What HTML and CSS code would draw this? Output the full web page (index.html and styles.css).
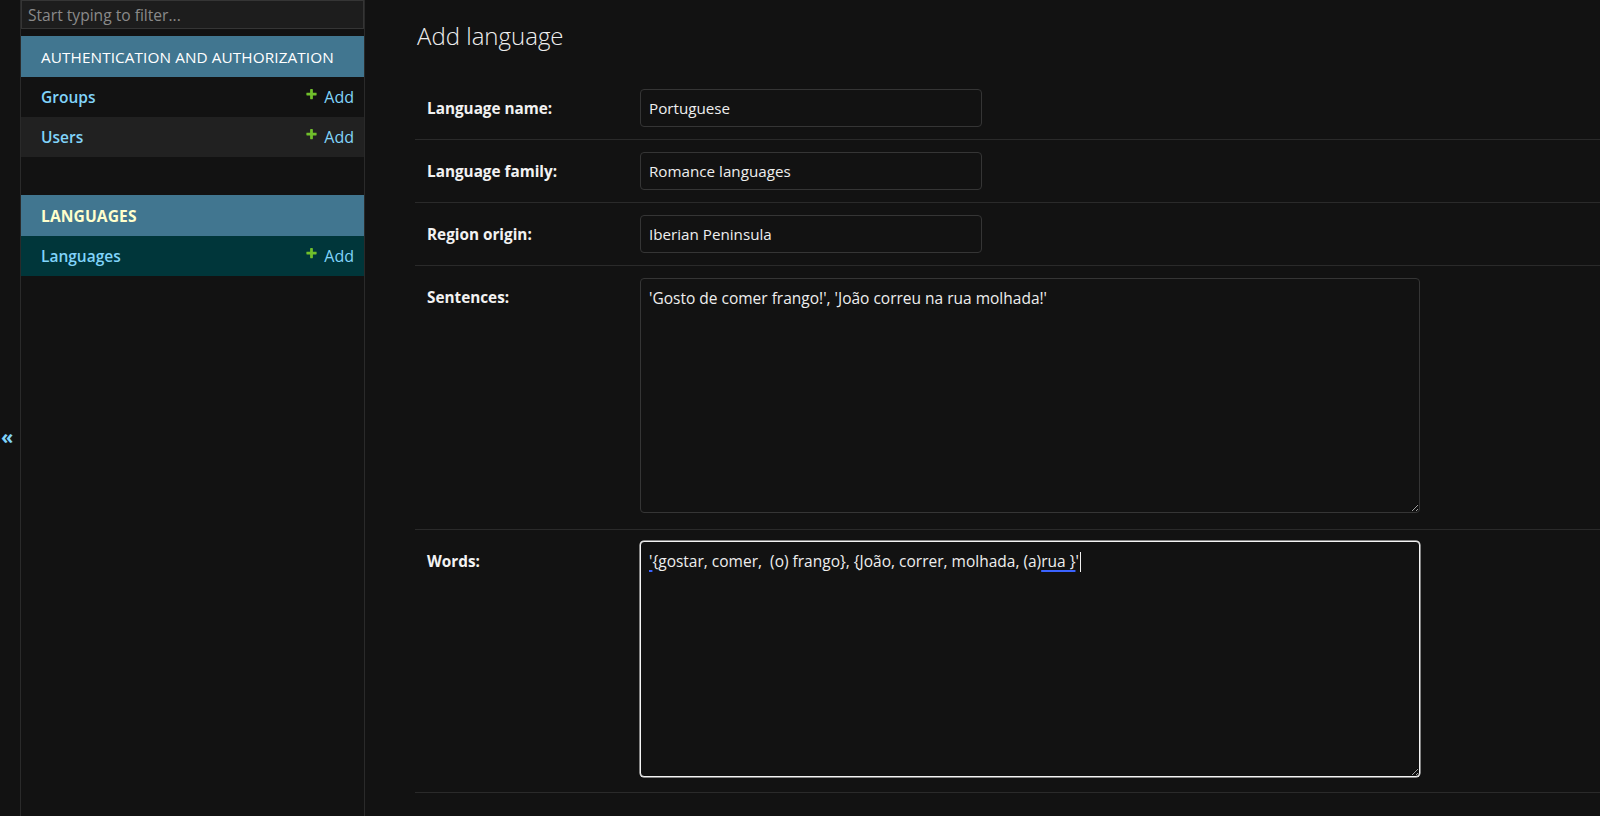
FILE: index.html
```html
<!DOCTYPE html>
<html lang="en">
<head>
<meta charset="utf-8">
<title>Add language | Django site admin</title>
<link rel="stylesheet" href="styles.css">
</head>
<body>
<div class="page">
  <button class="toggle-nav" type="button" aria-label="Toggle navigation">«</button>
  <nav class="sidebar">
    <input class="nav-filter" type="search" placeholder="Start typing to filter...">
    <div class="module">
      <div class="caption">AUTHENTICATION AND AUTHORIZATION</div>
      <div class="model-row">
        <a class="model-link" href="#">Groups</a>
        <a class="add-link" href="#"><svg class="plus" viewBox="0 0 1792 1792" width="13" height="13"><path fill="#70bf2b" d="M1600 736v192q0 40-28 68t-68 28h-416v416q0 40-28 68t-68 28h-192q-40 0-68-28t-28-68v-416h-416q-40 0-68-28t-28-68v-192q0-40 28-68t68-28h416v-416q0-40 28-68t68-28h192q40 0 68 28t28 68v416h416q40 0 68 28t28 68z"/></svg>Add</a>
      </div>
      <div class="model-row alt">
        <a class="model-link" href="#">Users</a>
        <a class="add-link" href="#"><svg class="plus" viewBox="0 0 1792 1792" width="13" height="13"><path fill="#70bf2b" d="M1600 736v192q0 40-28 68t-68 28h-416v416q0 40-28 68t-68 28h-192q-40 0-68-28t-28-68v-416h-416q-40 0-68-28t-28-68v-192q0-40 28-68t68-28h416v-416q0-40 28-68t68-28h192q40 0 68 28t28 68v416h416q40 0 68 28t28 68z"/></svg>Add</a>
      </div>
    </div>
    <div class="module current-app">
      <div class="caption current">LANGUAGES</div>
      <div class="model-row selected">
        <a class="model-link" href="#">Languages</a>
        <a class="add-link" href="#"><svg class="plus" viewBox="0 0 1792 1792" width="13" height="13"><path fill="#70bf2b" d="M1600 736v192q0 40-28 68t-68 28h-416v416q0 40-28 68t-68 28h-192q-40 0-68-28t-28-68v-416h-416q-40 0-68-28t-28-68v-192q0-40 28-68t68-28h416v-416q0-40 28-68t68-28h192q40 0 68 28t28 68v416h416q40 0 68 28t28 68z"/></svg>Add</a>
      </div>
    </div>
  </nav>
  <main class="content">
    <h1 class="title">Add language</h1>
    <form class="form">
      <div class="form-row">
        <label class="field-label">Language name:</label>
        <input class="text-input" type="text" value="Portuguese">
      </div>
      <div class="form-row">
        <label class="field-label">Language family:</label>
        <input class="text-input" type="text" value="Romance languages">
      </div>
      <div class="form-row">
        <label class="field-label">Region origin:</label>
        <input class="text-input" type="text" value="Iberian Peninsula">
      </div>
      <div class="form-row">
        <label class="field-label">Sentences:</label>
        <textarea class="textarea">'Gosto de comer frango!', 'João correu na rua molhada!'</textarea>
      </div>
      <div class="form-row">
        <label class="field-label">Words:</label>
        <div class="textarea focused" role="textbox"><span class="spell">'</span>{gostar, comer,&nbsp; (o) frango}, {João, correr, molhada, (a)<span class="spell">rua }</span>'<span class="caret"></span></div>
      </div>
    </form>
  </main>
</div>
</body>
</html>
```
FILE: styles.css
```css
html, body {
  margin: 0;
  padding: 0;
  background: #121212;
  height: 100%;
  overflow: hidden;
}
body {
  font-family: "Open Sans", "Noto Sans", "Liberation Sans", sans-serif;
  color: #eeeeee;
}
.page {
  display: flex;
  height: 816px;
}
.toggle-nav {
  flex: 0 0 21px;
  width: 21px;
  margin: 0;
  padding: 58px 0 0 1px;
  background: #121212;
  border: 0;
  border-right: 1px solid #2a2a2a;
  color: #81d4fa;
  font-family: "Open Sans", sans-serif;
  font-size: 20px;
  font-weight: 700;
  display: flex;
  align-items: center;
  justify-content: flex-start;
  line-height: 1;
}
.sidebar {
  flex: 0 0 343px;
  width: 343px;
  border-right: 1px solid #2a2a2a;
  display: flex;
  flex-direction: column;
}
.nav-filter {
  box-sizing: border-box;
  width: 100%;
  height: 29px;
  margin: 0 0 7px;
  padding: 2px 6px;
  background: #1d1d1d;
  border: 1px solid #353535;
  color: #eee;
  font-family: "Open Sans", sans-serif;
  font-size: 15.6px;
  outline: none;
}
.nav-filter::placeholder {
  color: #8a8a8a;
}
.module {
  margin-bottom: 38px;
}
.caption {
  height: 41px;
  display: flex;
  align-items: center;
  padding-left: 20px;
  background: #417690;
  color: #ffffff;
  font-size: 15.3px;
  letter-spacing: 0.1px;
}
.caption.current {
  color: #ffffcc;
  font-weight: 700;
  font-size: 15.6px;
}
.model-row {
  height: 40px;
  display: flex;
  align-items: center;
  justify-content: space-between;
  padding: 0 10px 0 20px;
}
.model-row.alt {
  background: #212121;
}
.model-row.selected {
  background: #00363a;
}
.model-link {
  color: #81d4fa;
  text-decoration: none;
  font-weight: 600;
  font-size: 15.5px;
}
.add-link {
  color: #81d4fa;
  text-decoration: none;
  font-size: 16px;
  display: flex;
  align-items: center;
}
.plus {
  margin-right: 6px;
  position: relative;
  top: -3px;
}
.content {
  flex: 1;
  padding-left: 50px;
  min-width: 0;
}
.title {
  margin: 0;
  height: 77px;
  display: flex;
  align-items: center;
  font-size: 24px;
  font-weight: 300;
  color: #eeeeee;
  padding: 0 0 6px 2px;
  box-sizing: border-box;
}
.form {
  margin: 0;
}
.form-row {
  display: flex;
  align-items: flex-start;
  padding: 12px;
  border-bottom: 1px solid #2a2a2a;
}
.field-label {
  flex: 0 0 213px;
  padding-top: 9px;
  line-height: 20px;
  font-weight: 700;
  font-size: 15.3px;
  color: #f2f2f2;
}
.text-input {
  box-sizing: border-box;
  width: 342px;
  height: 38px;
  margin: 0;
  padding: 0 8px;
  background: #121212;
  border: 1px solid #353535;
  border-radius: 4px;
  color: #eeeeee;
  font-family: "Open Sans", sans-serif;
  font-size: 15.2px;
  outline: none;
}
.textarea {
  box-sizing: border-box;
  display: block;
  width: 780px;
  height: 235px;
  margin: 0 0 4px;
  padding: 8px 8px;
  background: #121212;
  border: 1px solid #353535;
  border-radius: 4px;
  color: #eeeeee;
  font-family: "Open Sans", sans-serif;
  font-size: 15.5px;
  line-height: 22px;
  outline: none;
  resize: vertical;
  overflow: auto;
  white-space: pre-wrap;
}
.textarea.focused {
  border-color: #f4f4f4;
  height: 236px;
  margin-top: -1px;
  margin-bottom: 3px;
  box-shadow: 0 0 0 0.5px #f4f4f4;
}
.spell {
  text-decoration: underline;
  text-decoration-color: #3b63ff;
  text-decoration-thickness: 2px;
  text-underline-offset: 3px;
}
.caret {
  display: inline-block;
  width: 1px;
  height: 20px;
  background: #f0f0f0;
  vertical-align: -5px;
  margin-left: 1px;
}
```
